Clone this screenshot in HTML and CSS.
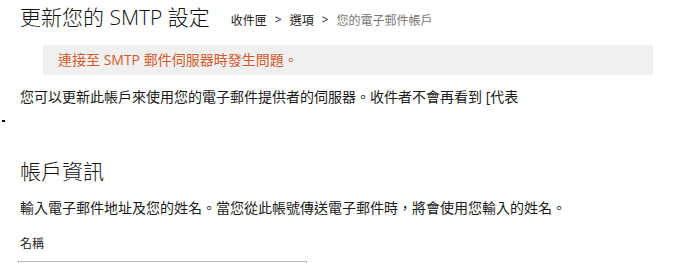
FILE: index.html
```html
<!DOCTYPE html>
<html lang="zh-Hant">
<head>
<meta charset="utf-8">
<link rel="stylesheet" href="styles.css">
</head>
<body>
<div class="page">
  <div class="titlebar">
    <h1 class="title">更新您的 SMTP 設定</h1>
    <nav class="crumbs"><span class="crumb">收件匣</span><span class="sep">&gt;</span><span class="crumb">選項</span><span class="sep">&gt;</span><span class="crumb current">您的電子郵件帳戶</span></nav>
  </div>
  <div class="error">連接至 SMTP 郵件伺服器時發生問題。</div>
  <p class="text intro">您可以更新此帳戶來使用您的電子郵件提供者的伺服器。收件者不會再看到 [代表</p>
  <div class="dot"></div>
  <h2 class="section">帳戶資訊</h2>
  <p class="text desc">輸入電子郵件地址及您的姓名。當您從此帳號傳送電子郵件時，將會使用您輸入的姓名。</p>
  <label class="label" for="name">名稱</label>
  <input class="field" id="name" type="text">
</div>
</body>
</html>
```
FILE: styles.css
```css
html, body {
  margin: 0;
  padding: 0;
  background: #fff;
}
body {
  font-family: "Segoe UI", "Open Sans", "Noto Sans CJK TC", sans-serif;
  color: #333;
  overflow: hidden;
}
.page {
  display: flex;
  flex-direction: column;
  align-items: flex-start;
}
.titlebar {
  display: flex;
  align-items: baseline;
  padding-left: 20px;
  height: 34px;
}
.title {
  margin: 0;
  font-size: 21px;
  font-weight: 300;
  line-height: 34px;
  color: #111;
}
.crumbs {
  display: flex;
  gap: 8px;
  margin-left: 21px;
  font-size: 12px;
  color: #222;
}
.crumb.current {
  color: #777;
}
.sep {
  color: #222;
}
.error {
  margin: 11px 0 0 43px;
  width: 595px;
  height: 30px;
  line-height: 30px;
  padding-left: 15px;
  background: #f0f0f0;
  color: #d35a2a;
  font-size: 14px;
}
.text {
  margin: 0;
  padding-left: 20px;
  font-size: 14px;
  line-height: 20px;
  color: #1a1a1a;
  white-space: nowrap;
}
.intro {
  margin-top: 12px;
}
.dot {
  margin: 13px 0 0 2px;
  width: 3px;
  height: 2px;
  background: #000;
}
.section {
  margin: 34px 0 0 0;
  padding-left: 20px;
  font-size: 21px;
  font-weight: 300;
  line-height: 30px;
  color: #111;
}
.desc {
  margin-top: 12px;
}
.label {
  margin: 18px 0 0 20px;
  font-size: 12px;
  line-height: 16px;
  color: #222;
}
.field {
  margin: 9px 0 0 18px;
  width: 289px;
  height: 30px;
  box-sizing: border-box;
  border: 1px solid #bbb;
  padding: 0 6px;
  font: inherit;
}
```
